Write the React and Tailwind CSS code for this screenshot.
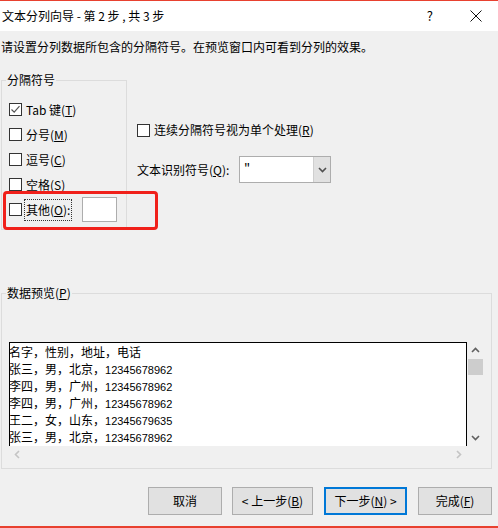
const font = "font-['Microsoft_YaHei_UI','Noto_Sans_CJK_SC','Noto_Sans',sans-serif]";

const previewRows = [
  ['名字，性别，地址，电话', ''],
  ['张三，男，北京，', '12345678962'],
  ['李四，男，广州，', '12345678962'],
  ['李四，男，广州，', '12345678962'],
  ['王二，女，山东，', '12345679635'],
  ['张三，男，北京，', '12345678962'],
];

const Box = ({ checked }) => (
  <span className="w-[13px] h-[13px] border border-[#333333] bg-white flex items-center justify-center shrink-0">
    {checked && (
      <svg width="11" height="11" viewBox="0 0 11 11">
        <path d="M1.5 5.5 L4.2 8.2 L9.5 2.2" fill="none" stroke="#555" strokeWidth="1.2" />
      </svg>
    )}
  </span>
);

const Option = ({ checked, label, hotkey }) => (
  <div className="h-[25px] flex items-center">
    <Box checked={checked} />
    <span className="ml-[4px] leading-[16px]">
      {label}(<u>{hotkey}</u>)
    </span>
  </div>
);

const Chevron = ({ dir = 'down', color = '#606060', size = 9 }) => {
  const d = {
    down: 'M1 3 L4.5 6.5 L8 3',
    up: 'M1 6 L4.5 2.5 L8 6',
    left: 'M6 1 L2.5 4.5 L6 8',
    right: 'M3 1 L6.5 4.5 L3 8',
  }[dir];
  return (
    <svg width={size} height={size} viewBox="0 0 9 9">
      <path d={d} fill="none" stroke={color} strokeWidth="1.6" />
    </svg>
  );
};

const Btn = ({ w, focus, children }) => (
  <button
    className={`${w} h-[28px] bg-[#e1e1e1] flex items-center justify-center leading-[16px] ${
      focus ? 'border-2 border-[#0078d7]' : 'border border-[#adadad]'
    }`}
  >
    {children}
  </button>
);

export default function App() {
  return (
    <div className={`relative w-[498px] h-[528px] overflow-hidden flex flex-col bg-[#f0f0f0] text-[12px] text-black ${font}`}>
      <div className="h-[1px] bg-[#e8412f]" />

      {/* title bar */}
      <div className="h-[30px] bg-white flex items-center pl-[2px] leading-[16px]">
        <span className="whitespace-pre">文本分列向导 - 第 2 步 , 共 3 步</span>
        <span className="flex-1" />
        <span className="mr-[37px] text-[13px]">?</span>
        <svg width="12" height="12" viewBox="0 0 12 12" className="mr-[16px]">
          <path d="M0.5 0.5 L11.5 11.5 M11.5 0.5 L0.5 11.5" stroke="#111" strokeWidth="1" />
        </svg>
      </div>

      <div className="mt-[8px] h-[16px] leading-[16px] pl-[1px]">
        请设置分列数据所包含的分隔符号。在预览窗口内可看到分列的效果。
      </div>

      {/* delimiters + qualifier */}
      <div className="mt-[17px] flex items-start">
        <fieldset className="ml-[1px] w-[126px] border border-[#dcdcdc]">
          <legend className="ml-[4px] px-[1px] leading-[16px]">分隔符号</legend>
          <div className="pl-[7px] pt-[9px] pb-[7px]">
            <Option checked label="Tab 键" hotkey="T" />
            <Option label="分号" hotkey="M" />
            <Option label="逗号" hotkey="C" />
            <Option label="空格" hotkey="S" />
            <div className="h-[25px] flex items-center">
              <Box />
              <span className="ml-[2px] px-[1px] h-[22px] flex items-center border border-dotted border-[#333] leading-[16px]">
                其他(<u>O</u>):
              </span>
              <span className="ml-[10px] w-[35px] h-[25px] bg-white border border-[#adadad]" />
            </div>
          </div>
        </fieldset>

        <div className="ml-[10px] flex flex-col">
          <div className="mt-[51px] h-[14px] flex items-center">
            <Box />
            <span className="ml-[4px] leading-[16px]">
              连续分隔符号视为单个处理(<u>R</u>)
            </span>
          </div>
          <div className="mt-[19px] h-[27px] flex items-center">
            <span className="w-[102px] leading-[16px]">
              文本识别符号(<u>Q</u>):
            </span>
            <div className="w-[92px] h-[27px] flex bg-white border border-[#adadad]">
              <span className="flex-1 pl-[4px] leading-[22px] text-[13px]">"</span>
              <span className="w-[17px] bg-[#e1e1e1] border-l border-[#cfcfcf] flex items-center justify-center">
                <Chevron dir="down" color="#505050" size={9} />
              </span>
            </div>
          </div>
        </div>
      </div>

      {/* preview */}
      <fieldset className="mt-[55px] ml-[1px] w-[491px] border border-[#dcdcdc]">
        <legend className="ml-[4px] px-[1px] leading-[16px]">
          数据预览(<u>P</u>)
        </legend>
        <div className="mt-[41px] pl-[7px] pb-[5px] flex">
          <div className="w-[458px] flex flex-col">
            <div className="h-[104px] bg-white border-l border-t border-r border-black pt-[1px] leading-[16px] overflow-hidden">
              {previewRows.map(([txt, num], i) => (
                <div key={i} className="whitespace-nowrap -ml-[1px]">
                  {txt}
                  <span className="font-['Liberation_Sans',sans-serif] text-[11px]">{num}</span>
                </div>
              ))}
            </div>
            <div className="h-[17px] flex items-center justify-between pl-[4px] pr-[4px]">
              <Chevron dir="left" color="#c4c4c4" />
              <Chevron dir="right" color="#c4c4c4" />
            </div>
          </div>
          <div className="w-[17px] h-[104px] flex flex-col items-center">
            <div className="h-[17px] flex items-center justify-center">
              <Chevron dir="up" color="#606060" />
            </div>
            <div className="w-[15px] h-[16px] bg-[#cdcdcd]" />
            <div className="flex-1" />
            <div className="h-[17px] flex items-center justify-center">
              <Chevron dir="down" color="#606060" />
            </div>
          </div>
        </div>
      </fieldset>

      {/* buttons */}
      <div className="mt-[18px] flex pl-[148px]">
        <Btn w="w-[74px]">取消</Btn>
        <div className="ml-[10px]">
          <Btn w="w-[81px]">
            &lt; 上一步(<u>B</u>)
          </Btn>
        </div>
        <div className="ml-[11px]">
          <Btn w="w-[83px]" focus>
            下一步(<u>N</u>) &gt;
          </Btn>
        </div>
        <div className="ml-[11px]">
          <Btn w="w-[74px]">
            完成(<u>F</u>)
          </Btn>
        </div>
      </div>

      <div className="flex-1" />
      <div className="h-[2px] bg-[#e8412f]" />

      {/* annotation */}
      <div className="absolute left-[3px] top-[191px] w-[155px] h-[39px] border-[3px] border-[#f0201a] rounded-[4px]" />
    </div>
  );
}
